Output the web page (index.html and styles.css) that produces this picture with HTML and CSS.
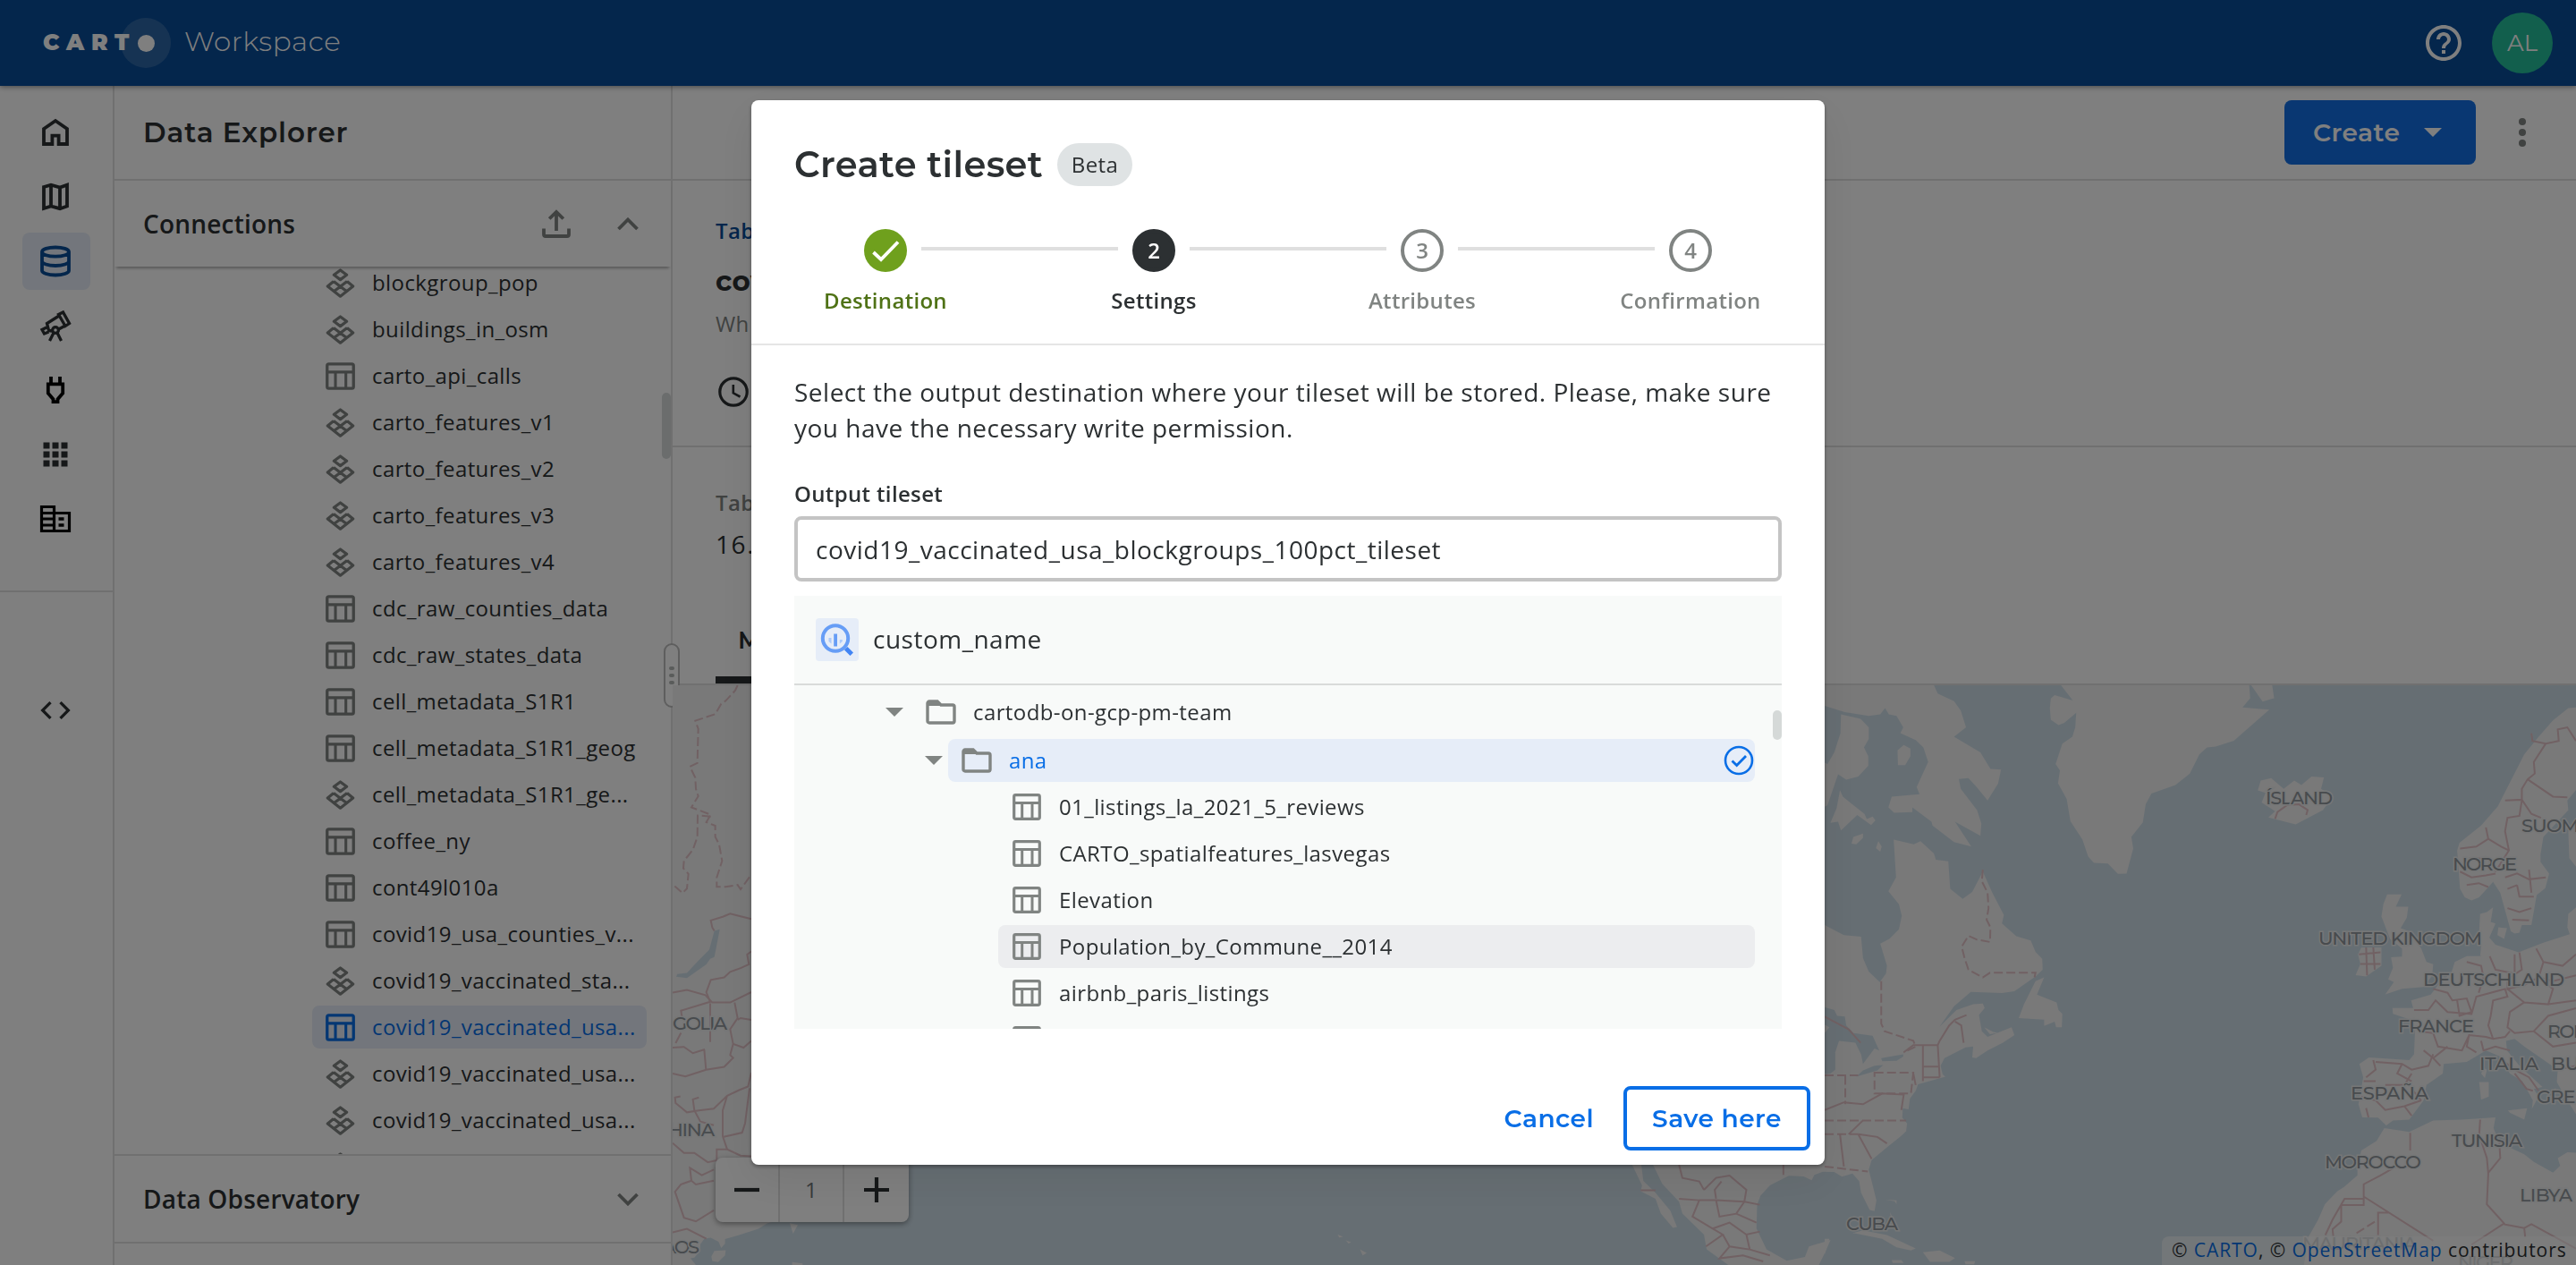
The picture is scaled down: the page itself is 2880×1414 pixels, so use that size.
FILE: index.html
```html
<!DOCTYPE html>
<html lang="en">
<head>
<meta charset="utf-8">
<title>CARTO Workspace</title>
<link rel="stylesheet" href="styles.css">
</head>
<body>
<svg class="sprite" aria-hidden="true">
  <symbol id="i-table" viewBox="0 0 32 30"><rect x="1.7" y="1.7" width="28.6" height="26.6" rx="1.8" fill="none" stroke="currentColor" stroke-width="3.2"/><path d="M2 10.5h28M10.7 10.5V28M22 10.5V28" fill="none" stroke="currentColor" stroke-width="3"/></symbol>
  <symbol id="i-tileset" viewBox="0 0 33 33"><path d="M16.5 2 23.6 7.3 16.5 12.6 9.4 7.3ZM9 14.5 2.3 20 16.5 31.2 30.7 20 24 14.5M9 14.5 24 26M24 14.5 9 26" fill="none" stroke="currentColor" stroke-width="3.2" stroke-linejoin="round"/></symbol>
  <symbol id="i-folder" viewBox="0 0 34 28"><path d="M2 24V4a2 2 0 0 1 2-2h9l4 4h13a2 2 0 0 1 2 2v16a2 2 0 0 1-2 2H4a2 2 0 0 1-2-2Z" fill="none" stroke="currentColor" stroke-width="3.4"/><path d="M2 3h12l4 4H2Z" fill="currentColor"/></symbol>
  <symbol id="i-caret" viewBox="0 0 20 10"><path d="M0 0h20L10 10Z" fill="currentColor"/></symbol>
</svg>

<div class="app">
  <header class="topbar">
    <div class="brand">
      <span class="brand-name">CART</span>
      <span class="brand-halo"><span class="brand-dot"></span></span>
      <span class="brand-product">Workspace</span>
    </div>
    <div class="topbar-actions">
      <svg class="help" viewBox="0 0 24 24"><path fill="currentColor" d="M11 18h2v-2h-2v2zm1-16C6.48 2 2 6.48 2 12s4.48 10 10 10 10-4.48 10-10S17.52 2 12 2zm0 18c-4.410 0-8-3.590-8-8s3.590-8 8-8 8 3.590 8 8-3.590 8-8 8zm0-14c-2.210 0-4 1.790-4 4h2c0-1.100.9-2 2-2s2 .9 2 2c0 2-3 1.750-3 5h2c0-2.250 3-2.500 3-5 0-2.210-1.790-4-4-4z"/></svg>
      <span class="avatar">AL</span>
    </div>
  </header>

  <div class="body">
    <nav class="rail">
      <a class="rail-item"><svg viewBox="0 0 48 48"><path class="line" d="M11 20 24 11 37 20V37H27.600V27.700H20.400V37H11Z"/></svg></a>
      <a class="rail-item"><svg viewBox="0 0 48 48"><path class="line" d="M11 13 19 10.700 29 13.500 37 10.700V34.500L29 37.200 19 34.500 11 37ZM19 10.700V34.500M29 13.500V37.200"/></svg></a>
      <a class="rail-item active"><svg viewBox="0 0 48 48"><path class="line" d="M39 13.500c0 2.900-6.700 5.200-15 5.200S9 16.400 9 13.500s6.700-5 15-5 15 2.100 15 5ZM9 13.500V34.500c0 2.800 6.700 5 15 5s15-2.200 15-5V13.500M9 24c0 2.800 6.700 5 15 5s15-2.200 15-5"/></svg></a>
      <a class="rail-item"><svg viewBox="0 0 48 48"><path class="line thin" d="M27.500 11.500 32.500 9 39.500 21.500 35 24.500ZM28 13 14.500 21.500 16.500 29.500 20 30M27.500 28 34.500 24.300M14 26 9 28.500 11.500 33 16.500 31M22 32 17.500 41M26 32 30.500 41"/><circle class="line thin" cx="24" cy="29" r="3.400"/></svg></a>
      <a class="rail-item black"><svg viewBox="0 0 48 48"><path class="line" d="M19 9v8M29 9v8M15.800 17.300V27.500L21.500 34.200V37.200H26.500V34.200L32.200 27.500V17.300Z"/></svg></a>
      <a class="rail-item"><svg viewBox="0 0 48 48"><path fill="currentColor" d="M10.500 10.500h7v7h-7zM20.500 10.500h7v7h-7zM30.500 10.500h7v7h-7zM10.500 20.500h7v7h-7zM20.500 20.500h7v7h-7zM30.500 20.500h7v7h-7zM10.500 30.500h7v7h-7zM20.500 30.500h7v7h-7zM30.500 30.500h7v7h-7z"/></svg></a>
      <a class="rail-item black"><svg viewBox="0 0 48 48"><path class="line building" d="M8.500 10.500H22.500V37.500H8.500ZM22.500 17.500H39.500V37.500H22.500M8.500 17.500H22.500M8.500 24H22.500M8.500 31H22.500"/><path fill="currentColor" d="M27.500 22.300h6v3.500h-6zM27.500 29.300h6v3.500h-6z"/></svg></a>
      <hr class="rail-rule">
      <a class="rail-item"><svg class="small" viewBox="0 0 24 24"><path fill="currentColor" d="M9.400 16.600 4.800 12l4.600-4.600L8 6l-6 6 6 6 1.400-1.400zm5.200 0 4.600-4.600-4.600-4.600L16 6l6 6-6 6-1.400-1.400z"/></svg></a>
    </nav>

    <aside class="sidebar">
      <h1 class="sidebar-title">Data Explorer</h1>
      <div class="section-head raised">
        <span>Connections</span>
        <svg class="upload" viewBox="0 0 32 32"><path d="M2 21.500V28a2 2 0 0 0 2 2H28a2 2 0 0 0 2-2V21.500M16 24V3M8.200 10.500 16 2.800 23.800 10.500" fill="none" stroke="currentColor" stroke-width="3.800"/></svg>
        <svg class="chev" viewBox="0 0 24 15"><path d="M1.500 13 12 2.500 22.500 13" fill="none" stroke="currentColor" stroke-width="3.800"/></svg>
      </div>
      <div class="tree">
        <ul class="tree-list">
          <li><svg><use href="#i-tileset"/></svg><span>blockgroup_pop</span></li>
          <li><svg><use href="#i-tileset"/></svg><span>buildings_in_osm</span></li>
          <li><svg><use href="#i-table"/></svg><span>carto_api_calls</span></li>
          <li><svg><use href="#i-tileset"/></svg><span>carto_features_v1</span></li>
          <li><svg><use href="#i-tileset"/></svg><span>carto_features_v2</span></li>
          <li><svg><use href="#i-tileset"/></svg><span>carto_features_v3</span></li>
          <li><svg><use href="#i-tileset"/></svg><span>carto_features_v4</span></li>
          <li><svg><use href="#i-table"/></svg><span>cdc_raw_counties_data</span></li>
          <li><svg><use href="#i-table"/></svg><span>cdc_raw_states_data</span></li>
          <li><svg><use href="#i-table"/></svg><span>cell_metadata_S1R1</span></li>
          <li><svg><use href="#i-table"/></svg><span>cell_metadata_S1R1_geog</span></li>
          <li><svg><use href="#i-tileset"/></svg><span>cell_metadata_S1R1_ge...</span></li>
          <li><svg><use href="#i-table"/></svg><span>coffee_ny</span></li>
          <li><svg><use href="#i-table"/></svg><span>cont49l010a</span></li>
          <li><svg><use href="#i-table"/></svg><span>covid19_usa_counties_v...</span></li>
          <li><svg><use href="#i-tileset"/></svg><span>covid19_vaccinated_sta...</span></li>
          <li class="selected"><svg><use href="#i-table"/></svg><span>covid19_vaccinated_usa...</span></li>
          <li><svg><use href="#i-tileset"/></svg><span>covid19_vaccinated_usa...</span></li>
          <li><svg><use href="#i-tileset"/></svg><span>covid19_vaccinated_usa...</span></li>
          <li><svg><use href="#i-tileset"/></svg></li>
        </ul>
        <i class="tree-thumb"></i>
      </div>
      <div class="section-head observatory">
        <span>Data Observatory</span>
        <svg class="chev" viewBox="0 0 24 15"><path d="M1.500 2 12 12.500 22.500 2" fill="none" stroke="currentColor" stroke-width="3.800"/></svg>
      </div>
      <div class="resizer"><i></i><i></i><i></i></div>
    </aside>

    <main class="main">
      <div class="toolbar">
        <button class="create">Create <svg><use href="#i-caret"/></svg></button>
        <span class="kebab"><i></i><i></i><i></i></span>
      </div>
      <section class="summary">
        <a class="crumb">Tab</a>
        <h2 class="table-name">cov</h2>
        <p class="muted">Wh</p>
        <svg class="clock" viewBox="0 0 34 34"><circle cx="17" cy="17" r="15.200" fill="none" stroke="currentColor" stroke-width="3.200"/><path d="M16.800 9V18.300L24.500 22.500" fill="none" stroke="currentColor" stroke-width="2.600"/></svg>
      </section>
      <section class="stats">
        <p class="muted strong">Tab</p>
        <p class="stat">16.</p>
        <div class="tabs"><span class="tab">M</span></div>
      </section>
      <section class="map">
        <svg class="map-canvas" viewBox="752 766 2128 648">
          <g class="land" transform="translate(748 766) scale(.3333 .41327)">
            <path d="M0 0H480V1300L440 1400 400 1440 330 1455 300 1470 270 1478 230 1488 188 1498 188 1510 175 1522 166 1505 140 1494 118 1497 105 1512 104 1530 85 1548 72 1550 90 1568H0Z"/>
            <path d="M142 1545 152 1530 190 1528 188 1542 165 1560 145 1558ZM405 1455 432 1460 416 1483ZM413 1560 448 1564V1570H413Z"/>
            <path class="water" d="M152 664 170 660 163 690 152 735 138 740 125 755 60 792 24 788 28 781 60 778 90 752 135 715Z"/>
            <g class="border">
              <path class="dash" d="M230 0 222 14 190 42 175 50 155 78 88 96 98 118 95 210 70 220 88 250 90 280 98 300 75 330 140 350 125 370 155 380 155 410 168 430 178 475 160 520 160 545 190 545 230 540 240 552 276 512M140 355 96 352 95 410 80 445 50 475 48 495 65 510 60 550 45 562 12 538"/>
              <path d="M276 632 240 625 205 618 180 626 140 636 145 655 152 664M276 720 262 728 268 755 240 765 205 775 185 790 140 797 125 830 138 856 40 880 45 905"/>
              <path d="M12 831 60 824 122 838 145 858 205 858 276 830M220 858 230 900 205 930 215 970 205 1000 215 1008 185 1032 124 1040 55 1058 12 1050M276 905 240 900 230 905M215 970 250 980 276 962M118 985 124 1040M12 980 50 978 80 995 120 985M138 860 138 965M40 940 22 968"/>
              <path d="M276 1048 265 1085 235 1095 195 1110 150 1145 100 1150 60 1155 22 1130 20 1115 38 1112M100 1115 80 1120 85 1150 105 1180 150 1190M195 1110 180 1150 180 1220 195 1255 240 1272 276 1274M270 1090 255 1185 245 1210 180 1222M12 1238 50 1265 85 1265 130 1290 160 1285 160 1255 195 1255M150 1310 110 1325 70 1305 75 1340 40 1350 20 1370 50 1440 90 1450 150 1420M150 1340 90 1350 75 1340M12 1480 60 1470 125 1497"/>
            </g>
          </g>
          <g class="land" transform="translate(880 900) scale(.7526 .3333)">
            <path d="M1252 1190H1268L1272 1260 1290 1300 1312 1360 1322 1415 1316 1418 1298 1370 1290 1320 1268 1295 1270 1275ZM1283 1190H1575V1233L1540 1228 1526 1240 1522 1258 1510 1245 1488 1243 1460 1275 1446 1310 1441 1340 1440 1420 1455 1490 1485 1528 1512 1515 1518 1480 1550 1458 1542 1500 1532 1545H1400L1366 1490 1362 1440 1330 1370 1325 1330 1300 1270Z"/>
            <path d="M818 1440 826 1448 820 1450ZM830 1460 838 1466 834 1470ZM851 1490 861 1502 855 1510Z"/>
            <g class="border">
              <path d="M1325 1206 1330 1250 1355 1262 1362 1290M1362 1290 1380 1250 1400 1242 1425 1290 1422 1330 1445 1340M1380 1320 1378 1290 1388 1262M1325 1320 1355 1325 1380 1325 1422 1330M1355 1325 1345 1380 1375 1420 1400 1400 1425 1440 1445 1430M1380 1325 1385 1380 1410 1370 1422 1330M1365 1480 1390 1440 1375 1420M1390 1440 1400 1480 1430 1490 1425 1440M1400 1480 1385 1520 1420 1510 1450 1530M1430 1490 1460 1510M1410 1370 1440 1400M1480 1206V1240M1268 1292H1290"/>
            </g>
          </g>
          <g class="land" transform="translate(2040 740) scale(.5357 .42985)">
            <path d="M-20 60H228L236 82 270 102 284 126 295 170 270 194 325 235 346 278 368 280 362 316 340 360 318 326 300 302 280 304 284 330 318 385 327 420 325 452 272 415 306 480 270 468 225 425 223 415 183 378 183 390 145 392 133 378 140 350 198 344 192 325 216 260 206 222 190 203 158 185 164 170 150 140 134 136 126 120 116 136 92 140 42 130-20 106Z"/>
            <path d="M34 136 75 148 92 170V200L82 222 91 245V270L70 298 45 306 28 292 6 372-20 390V250L6 265 20 235 33 185ZM32 333 38 350 60 372 83 395 88 408 100 402 106 412 97 424 68 398 34 438 28 415 12 418 25 380ZM165 216 179 225V245L168 268H153L152 230ZM60 455 80 446V457L66 474 56 472ZM112 466 119 480 116 493 107 484Z"/>
            <path d="M144 462 186 474 200 466 228 498 232 514 258 518 262 590 288 616 308 598 330 545 350 600 374 658 370 680 400 713 430 724 440 754 454 772 455 800 440 818 396 856 370 861 305 858 270 895 240 948 275 905 310 890 330 888 334 900 322 918 328 960 340 975 390 950 396 970 372 990 340 1010 316 1030 308 1028 310 1000 294 1002 250 1030 242 1050 246 1072 252 1078 195 1098 190 1115 178 1135 175 1163 163 1160 162 1185 172 1200 170 1220 160 1232 130 1262 98 1295 92 1320 100 1360 108 1400 104 1428 94 1425 76 1380 72 1350 58 1330 36 1338 20 1326-20 1325V674L0 684 40 710 76 714 80 770 92 805 115 832 128 810 130 790 116 732 135 720 155 695 161 660 155 630 133 596 149 560Z"/>
            <path class="water" d="M-20 890 20 905 26 920 42 922 45 945 60 965 100 972 114 1010 104 1005 80 1045 76 1020 64 990 30 985 22 1015V1060L12 1070 2 1072-20 1040V970L0 965 10 950-20 930ZM66 1078 80 1062 104 1050 122 1048 110 1062ZM118 1030 164 1020V1026L150 1037 120 1038ZM334 868 368 880V888L345 884Z"/>
            <path d="M458 820 443 865 484 885 488 905 496 915 495 950 483 950 480 935 458 946V930L405 926 416 890 440 830ZM333 950 352 962 362 964 345 968Z"/>
            <path d="M493 60 518 100 480 86 472 95 470 120 472 150 488 164 500 158 525 132 523 170 517 194 496 212 482 265 491 282 487 315 505 356 513 414 538 462 550 506 562 522 591 524 612 551 630 550 644 485 640 455 664 417 670 370 682 342 732 320 762 290 782 240 798 222 816 220 854 205 928 124 872 118 888 94 886 60ZM890 60H934L938 94 914 103Z"/>
            <path d="M910 308 932 302 958 330 980 308 995 320 1016 298 1042 300 1036 330 1060 350 1040 385 983 422 926 404 940 388 912 365 920 340 904 334Z"/>
            <path d="M1570 118 1552 120 1520 152 1490 194 1460 240 1405 375 1370 425 1325 470 1320 490 1326 590 1336 612 1350 620 1366 612 1395 572 1410 600 1432 700 1440 706 1450 704 1455 684 1475 684 1486 606 1504 588 1512 550 1494 520V500L1500 455 1552 385 1550 360 1570 330ZM1570 430 1552 440 1554 510 1570 535ZM1395 638 1390 676 1400 680 1386 720 1388 755 1368 765 1370 740 1366 700 1368 655 1382 650ZM1406 690 1424 692 1418 720 1404 710Z"/>
            <path d="M1570 636 1552 655 1550 690 1555 708 1500 730 1448 755 1400 735 1386 715 1370 765 1340 765 1315 780 1308 808 1280 840 1265 865 1224 880 1228 900 1185 900 1186 915 1218 928 1232 960 1230 1020 1220 1035 1136 1028 1116 1045 1124 1080 1114 1150 1122 1184 1155 1185 1172 1205 1186 1192 1220 1190 1250 1140 1256 1100 1290 1070 1292 1045 1340 1040 1380 1010 1408 1025 1430 1070 1456 1090 1478 1140 1476 1162 1490 1130 1480 1110 1498 1105 1450 1050 1424 1010 1422 985 1440 980 1460 1000 1530 1060 1528 1092 1545 1130 1570 1180Z"/>
            <path d="M1174 604H1204L1192 636H1218L1215 665 1202 692 1220 700 1245 745 1256 780 1270 786 1268 815 1250 845 1205 850 1170 864 1188 832 1176 825 1186 795 1182 768 1205 766V745L1180 720 1162 662 1166 630ZM1120 742H1162V790L1130 818 1108 814 1118 785 1113 760ZM1376 1056 1382 1060 1378 1082 1370 1070ZM1366 1092H1386V1130L1370 1138ZM1426 1166 1466 1160 1460 1190 1430 1172Z"/>
            <path d="M1168 1212 1220 1222 1270 1192 1330 1190 1400 1184 1396 1212 1408 1250 1460 1280 1480 1300 1520 1328 1535 1310 1530 1290 1550 1275 1570 1276V1570H1000L1010 1494 1030 1450 1044 1410 1070 1376 1084 1365 1112 1335V1310L1120 1270 1152 1245Z"/>
            <path d="M45 1490 80 1478 130 1490 190 1525 180 1530 150 1522 120 1500 60 1485ZM205 1535 240 1530 272 1550 260 1560 220 1560ZM0 1500H10L0 1540ZM140 1555H160L165 1563H142ZM292 1558H314L312 1566H294ZM128 1398 150 1400 150 1410 146 1402ZM136 1430 142 1445 140 1452Z"/>
            <g class="border">
              <path class="dash" d="M330 540 328 570 340 600 342 640 338 670 346 690 345 728 318 722 300 712 286 740 292 770 300 800 330 820 345 808H440L438 820M118 830V940L125 960 185 985 190 1000 165 1015M0 1075H70M43 1076V1150M0 1192H170M0 1228H70M0 1312 90 1325M104 1068H185L180 1122H104ZM1110 1485 1155 1450"/>
              <path d="M0 922 50 955 75 990M165 1015 185 996H236L240 985 260 945 272 930 296 918M272 935 285 945 290 990M205 996V1090M236 996 240 1080M205 1052H240M205 1080H240M0 1165 40 1145 80 1150 120 1122 165 1125 160 1165M80 1192 50 1228M32 1228 40 1312M70 1228 98 1292M70 1228 110 1235 130 1252M185 1070 190 1100"/>
              <path d="M1222 1224V1270M1195 1310 1160 1335 1125 1358V1412H1078V1455L1060 1475 1062 1500M1125 1396H1085L1060 1450 1045 1490M1125 1390 1270 1505M1155 1490V1432H1178M1368 1190 1366 1230 1382 1290 1385 1330 1382 1410 1418 1460 1350 1515M1418 1462 1460 1472 1475 1462 1568 1525M1460 1472 1462 1495M1408 1250 1410 1290 1384 1330"/>
              <path d="M1475 185 1477 205 1505 212 1532 205 1530 175 1550 170 1568 205M1505 212 1480 260 1482 290 1467 305 1455 330 1455 360 1450 400 1425 405 1420 440 1428 490 1400 545M1467 305 1520 350 1550 352M1420 360 1455 358 1475 395 1495 405M1326 485 1360 480 1385 460 1412 480 1428 490M1380 430 1385 460M1345 510 1385 512 1400 545M1326 545 1350 560 1380 555 1400 550M1340 580 1365 575 1385 585M1420 560 1445 550 1470 565 1505 560M1445 580 1450 610 1480 610M1470 540 1475 600M1425 590 1445 580M1425 640 1450 650 1475 640M1435 670 1470 672"/>
              <path d="M1115 760 1160 755M1130 742 1132 815M1145 742 1148 800M1118 785H1160M940 408 945 390 965 372 990 370 1008 385 1005 398"/>
              <path d="M1270 850 1300 860 1310 880 1340 875 1350 910 1325 920 1320 880M1230 905 1260 905 1275 880 1300 910 1350 915 1360 870 1390 860 1420 850 1425 870 1395 880 1390 920 1385 945 1395 980M1340 780 1370 790 1375 820 1365 860M1388 765 1400 800 1440 810 1440 760M1450 755 1455 800 1425 825 1425 850 1460 840 1490 820 1500 780 1485 745M1500 780 1540 790 1568 760M1490 820 1520 830 1568 815M1425 850 1460 885 1510 890 1520 850 1490 820M1510 890 1568 880M1460 885 1430 910 1425 950 1440 965 1480 960 1510 920 1568 900M1480 960 1520 1000 1568 990M1530 1060 1568 1050M1240 960 1270 965 1280 1000 1330 1010 1345 970 1380 975 1395 980 1420 975 1430 960M1250 1010 1270 1030 1300 1000M1270 1030 1285 1050M1345 970 1340 1000 1360 1015M1370 985 1375 1010 1400 1000 1430 1010"/>
              <path d="M1145 1035 1150 1060 1130 1080M1150 1040 1205 1045 1225 1060 1260 1050 1270 1020M1205 1045 1195 1070 1225 1090M1125 1090 1150 1090M1170 1100 1210 1100 1225 1070M1120 1130 1150 1140 1170 1165 1210 1155 1245 1140M1130 1160 1135 1184M1210 1155 1225 1180M1225 1110 1245 1140M1408 1030 1440 1060 1470 1080 1490 1115M1440 1070 1465 1110 1478 1115"/>
            </g>
          </g>
          <g class="labels">
            <text x="752" y="1151" textLength="61">GOLIA</text>
            <text x="733" y="1270" textLength="66">CHINA</text>
            <text x="731" y="1401" textLength="51">LAOS</text>
            <text x="2533" y="899" textLength="75">ÍSLAND</text>
            <text x="2819" y="930" textLength="70">SUOMI</text>
            <text x="2742" y="973" textLength="72">NORGE</text>
            <text x="2592" y="1056" textLength="183">UNITED KINGDOM</text>
            <text x="2709" y="1102" textLength="158">DEUTSCHLAND</text>
            <text x="2681" y="1154" textLength="85">FRANCE</text>
            <text x="2848" y="1160" textLength="95">ROMÂNIA</text>
            <text x="2772" y="1196" textLength="66">ITALIA</text>
            <text x="2852" y="1196" textLength="112">BULGARIA</text>
            <text x="2628" y="1229" textLength="87">ESPAÑA</text>
            <text x="2836" y="1233" textLength="84">GREECE</text>
            <text x="2741" y="1282" textLength="79">TUNISIA</text>
            <text x="2599" y="1306" textLength="108">MOROCCO</text>
            <text x="2817" y="1343" textLength="59">LIBYA</text>
            <text x="2064" y="1375" textLength="58">CUBA</text>
            <text class="faint" x="2574" y="1397" textLength="128">MAURITANIA</text>
            <text class="faint" x="2748" y="1418" textLength="62">NIGER</text>
          </g>
        </svg>
        <div class="zoom">
          <span><svg viewBox="0 0 28 28"><path d="M0 14H28" stroke="currentColor" stroke-width="4.200"/></svg></span>
          <span class="zoom-level">1</span>
          <span><svg viewBox="0 0 28 28"><path d="M0 14H28M14 0V28" stroke="currentColor" stroke-width="4.200"/></svg></span>
        </div>
        <div class="attribution">© <a>CARTO</a>, © <a>OpenStreetMap</a> contributors</div>
      </section>
    </main>
  </div>
</div>

<div class="backdrop">
  <div class="dialog" role="dialog">
    <div class="dialog-head">
      <div class="dialog-title"><h2>Create tileset</h2><span class="pill">Beta</span></div>
      <ol class="stepper">
        <li class="done"><span class="bullet"><svg viewBox="0 0 48 48"><path d="M10.500 26 19 34 38 14.500" fill="none" stroke="#fff" stroke-width="3.800"/></svg></span><span class="step-label">Destination</span></li>
        <li class="current"><span class="bullet">2</span><span class="step-label">Settings</span></li>
        <li><span class="bullet">3</span><span class="step-label">Attributes</span></li>
        <li><span class="bullet">4</span><span class="step-label">Confirmation</span></li>
      </ol>
    </div>
    <div class="dialog-body">
      <p class="intro">Select the output destination where your tileset will be stored. Please, make sure<br>you have the necessary write permission.</p>
      <div class="field-label">Output tileset</div>
      <div class="field">covid19_vaccinated_usa_blockgroups_100pct_tileset</div>
      <div class="picker">
        <div class="picker-head">
          <span class="bq"><svg viewBox="0 0 48 48"><circle cx="22" cy="22.500" r="14.200" fill="none" stroke="#669df6" stroke-width="4"/><path d="M14.500 22h3v6.500l-3-2.500zM26.800 24h3v2l-3 2.500z" fill="#aecbfa"/><path d="M20.200 17.500h3.800v14h-3.800z" fill="#669df6"/><path d="M32 35.500 35.500 32 42 38.500 38.500 42Z" fill="#4285f4"/></svg></span>
          <span>custom_name</span>
        </div>
        <div class="picker-tree">
          <div class="node project"><svg class="caret"><use href="#i-caret"/></svg><div class="node-body"><svg class="folder"><use href="#i-folder"/></svg>cartodb-on-gcp-pm-team</div></div>
          <div class="node dataset"><svg class="caret"><use href="#i-caret"/></svg><div class="node-body"><svg class="folder"><use href="#i-folder"/></svg><span>ana</span><svg class="tick" viewBox="0 0 34 34"><circle cx="17" cy="17" r="15" fill="none" stroke="currentColor" stroke-width="2.600"/><path d="M9.500 17.500 14.700 22.500 25 12" fill="none" stroke="currentColor" stroke-width="2.800"/></svg></div></div>
          <div class="node leaf"><svg class="table"><use href="#i-table"/></svg>01_listings_la_2021_5_reviews</div>
          <div class="node leaf"><svg class="table"><use href="#i-table"/></svg>CARTO_spatialfeatures_lasvegas</div>
          <div class="node leaf"><svg class="table"><use href="#i-table"/></svg>Elevation</div>
          <div class="node leaf hover"><svg class="table"><use href="#i-table"/></svg>Population_by_Commune__2014</div>
          <div class="node leaf"><svg class="table"><use href="#i-table"/></svg>airbnb_paris_listings</div>
          <div class="node leaf"><svg class="table"><use href="#i-table"/></svg></div>
          <i class="picker-thumb"></i>
        </div>
      </div>
    </div>
    <div class="dialog-actions"><button class="btn-text">Cancel</button><button class="btn-outline">Save here</button></div>
  </div>
</div>
</body>
</html>
```
FILE: styles.css
```css
* { box-sizing: border-box; }
:root {
  --text: #2c3032;
  --muted: #808482;
  --line: #e0e0e0;
  --primary: #096ee6;
  --head: Montserrat, Inter, "Open Sans", sans-serif;
}
body {
  margin: 0;
  width: 2880px;
  height: 1414px;
  overflow: hidden;
  background: #fff;
  color: var(--text);
  font: 400 24px/1.4 "Open Sans", "Noto Sans", sans-serif;
  letter-spacing: .4px;
}
h1, h2, p, ul, ol { margin: 0; padding: 0; }
ul, ol { list-style: none; }
button { border: 0; background: none; font: inherit; letter-spacing: inherit; padding: 0; }
svg { display: block; flex: none; }
.sprite { position: absolute; width: 0; height: 0; }

.app { height: 1414px; display: flex; flex-direction: column; }

/* top bar */
.topbar {
  height: 96px;
  flex: none;
  z-index: 3;
  display: flex;
  align-items: center;
  justify-content: space-between;
  padding: 0 26px 0 48px;
  background: #084c98;
  color: #fff;
  box-shadow: 0 1px 6px rgba(0, 0, 0, .45);
}
.brand { display: flex; align-items: center; }
.brand-name { font: 900 25px/1 var(--head); letter-spacing: 7.8px; width: 87px; white-space: nowrap; padding-bottom: 1px; }
.brand-halo {
  width: 56px; height: 56px; border-radius: 50%;
  display: flex; align-items: center; justify-content: center;
  background: rgba(255, 255, 255, .15);
}
.brand-dot { width: 19px; height: 19px; border-radius: 50%; background: #fff; }
.brand-product { font: 300 31px/1 var(--head); letter-spacing: .55px; margin-left: 15px; padding-bottom: 3px; }
.topbar-actions { display: flex; align-items: center; gap: 30px; }
.help { width: 48px; height: 48px; }
.avatar {
  width: 68px; height: 68px; border-radius: 50%;
  display: flex; align-items: center; justify-content: center;
  background: #24be9a; font: 400 26px/1 var(--head); letter-spacing: 0;
}

.body { flex: 1; display: flex; min-height: 0; }

/* left rail */
.rail {
  width: 128px; flex: none;
  border-right: 2px solid var(--line);
  padding: 20px 0 0 25px;
  display: flex; flex-direction: column; gap: 8px;
}
.rail-item {
  width: 76px; height: 64px; border-radius: 8px;
  display: flex; align-items: center; justify-content: center;
}
.rail-item svg { width: 48px; height: 48px; margin-right: 2px; }
.rail-item svg.small { width: 40px; height: 40px; }
.rail-item.active { background: #e6edf8; color: #084c98; }
.rail-item.black { color: #000; }
.line { fill: none; stroke: currentColor; stroke-width: 3.8; }
.line.thin { stroke-width: 3.3; }
.line.building { stroke-width: 3.2; }
.rail-rule { width: 126px; height: 2px; border: 0; margin: 40px 0 92px -25px; background: var(--line); }

/* sidebar */
.sidebar {
  width: 624px; flex: none; position: relative;
  border-right: 2px solid var(--line);
  display: flex; flex-direction: column;
}
.sidebar-title {
  height: 106px; flex: none;
  border-bottom: 2px solid var(--line);
  padding-left: 32px;
  font: 600 31px/104px var(--head); letter-spacing: .9px;
}
.section-head {
  height: 98px; flex: none;
  display: flex; align-items: center;
  padding: 0 36px 0 32px;
  font-size: 28px; font-weight: 600; letter-spacing: .2px;
}
.section-head span { flex: 1; padding-top: 1px; }
.raised { z-index: 1; background: #fff; height: 96px; box-shadow: 0 4px 3px -2px rgba(0, 0, 0, .3); }
.upload { width: 32px; height: 32px; margin-right: 52px; color: var(--muted); }
.chev { width: 24px; height: 15px; color: var(--muted); }
.observatory { border-top: 2px solid var(--line); border-bottom: 2px solid var(--line); height: 100px; margin-bottom: 24px; }
.tree { flex: 1; min-height: 0; overflow: hidden; position: relative; }
.tree-list { padding-left: 221px; margin-top: -6px; }
.tree-list li {
  height: 48px; width: 374px; margin-bottom: 4px; border-radius: 8px;
  display: flex; align-items: center; gap: 19px;
  padding-left: 15px; white-space: nowrap;
}
.tree-list svg { width: 33px; height: 33px; color: var(--muted); }
.tree-list .selected { background: #e6edf8; color: var(--primary); }
.tree-list .selected svg { color: var(--primary); }
.tree-thumb { position: absolute; right: 0; top: 141px; width: 10px; height: 74px; border-radius: 5px; background: #d6dada; }
.resizer {
  position: absolute; right: -10px; top: 623px;
  width: 18px; height: 72px; border: 2px solid #bdbdbd; border-radius: 9px; background: #fff;
  display: flex; flex-direction: column; align-items: center; justify-content: center; gap: 4px;
}
.resizer i { width: 6px; height: 4px; border-radius: 2px; background: #b4b8b6; }

/* main column */
.main { flex: 1; display: flex; flex-direction: column; min-width: 0; }
.toolbar {
  height: 106px; flex: none; border-bottom: 2px solid var(--line);
  display: flex; align-items: center; justify-content: flex-end; padding-right: 56px;
}
.create {
  width: 214px; height: 72px; border-radius: 8px; margin-right: 48px;
  display: flex; align-items: center; padding-left: 32px; gap: 27px;
  background: #126fe4; color: #fff; font: 600 28px/1 var(--head); letter-spacing: .5px;
}
.create svg { width: 20px; height: 10px; }
.kebab { display: flex; flex-direction: column; gap: 4px; }
.kebab i { width: 8px; height: 8px; border-radius: 50%; background: var(--muted); }
.summary {
  height: 298px; flex: none; border-bottom: 2px solid var(--line);
  padding: 36px 0 0 48px;
}
.crumb { display: block; height: 40px; line-height: 40px; font-weight: 600; color: #084c98; }
.table-name { font: 700 31px/40px var(--head); letter-spacing: .5px; margin-top: 16px; }
.muted { color: var(--muted); line-height: 40px; }
.muted.strong { font-weight: 600; }
.summary .muted { margin-top: 8px; }
.clock { width: 34px; height: 34px; margin: 39px 0 0 3px; }
.stats { height: 266px; flex: none; padding: 42px 0 0 48px; border-bottom: 2px solid var(--line); }
.stat { font-size: 28px; line-height: 40px; margin-top: 6px; letter-spacing: 1.6px; }
.tabs { margin-top: 76px; display: flex; }
.tab { width: 120px; height: 60px; border-bottom: 8px solid var(--text); padding-left: 25px; font: 600 27px/24px var(--head); }

/* map */
.map { flex: 1; position: relative; background: #cddde7; overflow: hidden; }
.map-canvas { width: 2128px; height: 648px; }
.land { fill: #f2f2f2; }
.land .water { fill: #cddde7; }
.border path { fill: none; stroke: #e2c2c7; stroke-width: 2px; vector-effect: non-scaling-stroke; }
.border .dash { stroke-dasharray: 10 4; }
.labels text {
  font: 500 21px "Montserrat", "Open Sans", sans-serif; letter-spacing: 0;
  fill: #90979c; stroke: #eceeef; stroke-width: 3px; paint-order: stroke;
}
.labels .faint { fill: #b4babd; }
.zoom {
  position: absolute; left: 48px; top: 528px;
  width: 216px; height: 72px; border-radius: 8px;
  display: grid; grid-template-columns: 70px 74px 72px; background: #fff;
  box-shadow: 0 2px 6px rgba(0, 0, 0, .4);
}
.zoom span { display: flex; align-items: center; justify-content: center; }
.zoom svg { width: 28px; height: 28px; }
.zoom .zoom-level { border: solid var(--line); border-width: 0 2px; color: #70757a; }
.attribution {
  position: absolute; right: 0; bottom: 0; height: 32px; width: 463px;
  padding: 0 11px; line-height: 31px; text-align: right; white-space: nowrap;
  letter-spacing: .94px; font-size: 21px;
  border-radius: 8px 0 0 0; background: rgba(255, 255, 255, .5);
}
.attribution a { color: var(--primary); }

/* dialog */
.backdrop {
  position: fixed; inset: 0; z-index: 10;
  display: flex; align-items: center; justify-content: center;
  background: rgba(0, 0, 0, .5);
}
.dialog {
  width: 1200px; height: 1190px; border-radius: 8px; background: #fff;
  display: flex; flex-direction: column;
  box-shadow: 0 2px 4px rgba(0, 0, 0, .35), 0 16px 48px rgba(0, 0, 0, .08);
}
.dialog-head { height: 274px; flex: none; border-bottom: 2px solid #e5e5e5; padding: 48px 0 0; }
.dialog-title { display: flex; align-items: center; height: 48px; padding-left: 48px; }
.dialog-title h2 { font: 600 40px/48px var(--head); letter-spacing: .35px; width: 294px; white-space: nowrap; }
.pill { width: 84px; height: 48px; border-radius: 24px; background: #dfe3e4; text-align: center; line-height: 47px; }
.stepper { display: grid; grid-template-columns: repeat(4, 300px); margin-top: 48px; }
.stepper li {
  display: flex; flex-direction: column; align-items: center; gap: 12px;
  color: var(--muted); font-weight: 600; position: relative;
}
.stepper li + li::before {
  content: ""; position: absolute; top: 20px; left: -110px; width: 220px; height: 4px; background: #dfdfdf;
}
.bullet {
  width: 48px; height: 48px; border-radius: 50%; border: 4px solid var(--muted);
  display: flex; align-items: center; justify-content: center; letter-spacing: 0; font-weight: 600;
}
.step-label { line-height: 40px; letter-spacing: .3px; }
.done .bullet { background: #6fa01d; border: 0; }
.done .bullet svg { width: 48px; height: 48px; }
.stepper .done { color: #4f7216; }
.current .bullet { background: var(--text); border-color: var(--text); color: #fff; }
.stepper .current { color: var(--text); }
.dialog-body { flex: 1; padding: 32px 48px 0; }
.intro { font-size: 28px; line-height: 40px; letter-spacing: .5px; white-space: nowrap; }
.field-label { margin-top: 34px; line-height: 40px; height: 40px; font-weight: 600; letter-spacing: .35px; }
.field {
  height: 73px; margin-top: 5px; border: 4px solid #c4c4c4; border-radius: 8px;
  padding-left: 20px; font-size: 28px; line-height: 66px; letter-spacing: .5px;
}
.picker { margin-top: 16px; height: 484px; background: #f8faf9; display: flex; flex-direction: column; }
.picker-head {
  height: 100px; flex: none; border-bottom: 2px solid #d9dbda;
  display: flex; align-items: center; gap: 16px; padding-left: 24px; font-size: 28px; letter-spacing: .5px;
}
.bq { width: 48px; height: 48px; border-radius: 4px; background: #e6edf8; }
.picker-tree { flex: 1; overflow: hidden; position: relative; padding-top: 6px; }
.node { height: 48px; display: flex; align-items: center; margin: 0 30px 4px 0; }
.node-body { display: flex; align-items: center; height: 48px; flex: 1; border-radius: 8px; padding-left: 15px; gap: 19px; }
.caret { width: 20px; height: 10px; color: var(--muted); }
.folder { width: 34px; height: 28px; color: var(--muted); }
.project { padding-left: 102px; margin-bottom: 6px; }
.project .node-body { margin-left: 10px; }
.dataset { padding-left: 146px; }
.dataset .node-body { margin-left: 6px; background: #e6edf8; color: var(--primary); }
.dataset .node-body span { flex: 1; }
.dataset .tick { width: 34px; height: 34px; margin-right: 1px; }
.table { width: 32px; height: 30px; color: var(--muted); }
.leaf { margin-left: 228px; padding-left: 16px; gap: 20px; border-radius: 8px; }
.leaf.hover { background: #ecedef; }
.picker-thumb { position: absolute; right: 0; top: 28px; width: 10px; height: 33px; border-radius: 5px; background: #d5d9d8; }
.dialog-actions { height: 88px; flex: none; display: flex; justify-content: flex-end; padding-right: 16px; gap: 33px; }
.dialog-actions button { height: 72px; color: var(--primary); font: 600 28px/1 var(--head); letter-spacing: .45px; }
.dialog-actions .btn-outline { width: 209px; border: 4px solid var(--primary); border-radius: 8px; }
```
